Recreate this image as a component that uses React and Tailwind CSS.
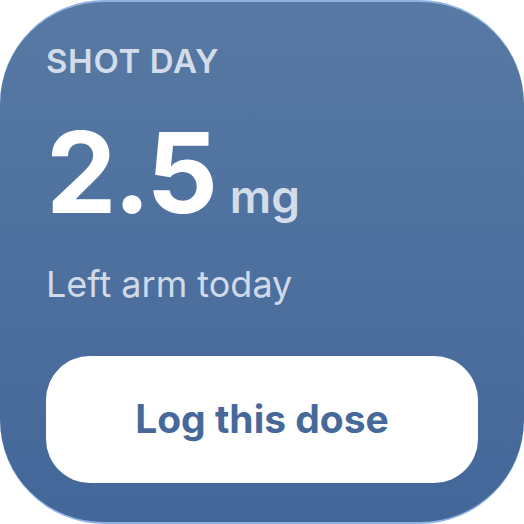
import React from "react";

const App = () => {
  return (
    <div className="w-[524px] h-[524px] bg-white" style={{ fontFamily: "Inter, 'Noto Sans', sans-serif" }}>
      <div className="w-full h-full rounded-[104px] bg-gradient-to-b from-[#5779a3] to-[#44679a] border-t-2 border-b-2 border-[#8fb3e3] flex flex-col px-[46px] pt-[43px]">
        <div className="text-[33px] font-semibold leading-none tracking-[0.02em] text-[#d3dce9]">
          SHOT DAY
        </div>
        <div className="flex items-baseline mt-[38px] leading-none">
          <span className="text-[112px] font-bold tracking-[-0.03em] text-white">2.5</span>
          <span className="text-[46px] font-semibold text-[#d3dce9] ml-[15px]">mg</span>
        </div>
        <div className="text-[36px] leading-none text-[#d0dae8] mt-[38px]">
          Left arm today
        </div>
        <button className="mt-[54px] h-[127px] w-full rounded-[44px] bg-white flex items-center justify-center text-[39px] font-bold text-[#46699a]">
          Log this dose
        </button>
      </div>
    </div>
  );
};

export default App;
